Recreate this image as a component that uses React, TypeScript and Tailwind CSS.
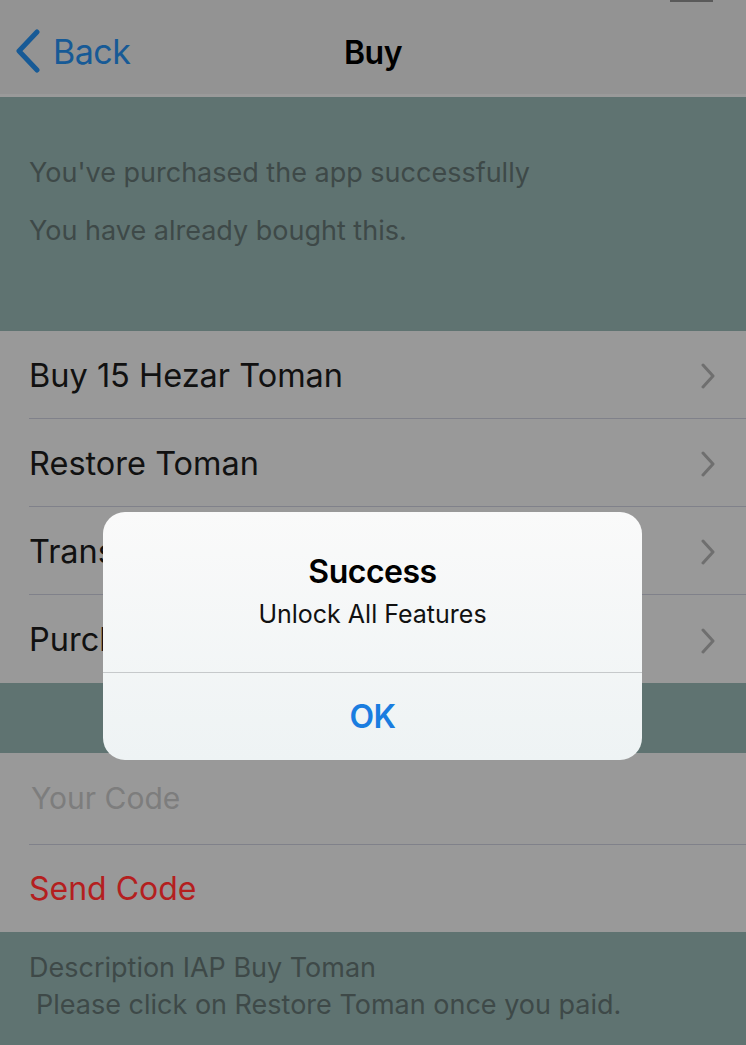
import React from "react";

const rows = ["Buy 15 Hezar Toman", "Restore Toman", "Transfer Toman", "Purchase History"];

function Chevron() {
  return (
    <svg width="16" height="26" viewBox="0 0 16 26" className="shrink-0">
      <path d="M3 2 L13 13 L3 24" fill="none" stroke="#6f6f6f" strokeWidth="3" strokeLinecap="round" strokeLinejoin="round" />
    </svg>
  );
}

export default function App() {
  const font = { fontFamily: "Inter, 'Noto Sans', sans-serif" };
  return (
    <div className="relative w-[746px] h-[1045px] overflow-hidden bg-[#5f7371]" style={font}>
      {/* Nav bar */}
      <div className="relative h-[97px] bg-[#939393] border-b-[3px] border-[#9a9a9a] flex items-center">
        <div className="absolute top-0 left-[670px] w-[43px] h-[2px] bg-[#5a5a5a]" />
        <div className="flex items-center pl-[15px] gap-[12px] pt-[8px]">
          <svg width="26" height="44" viewBox="0 0 26 44">
            <path d="M22 3 L4 22 L22 41" fill="none" stroke="#175a96" strokeWidth="5" strokeLinecap="round" strokeLinejoin="round" />
          </svg>
          <span className="text-[34px] text-[#175a96] tracking-[-0.5px]">Back</span>
        </div>
        <span className="absolute left-0 right-0 text-center pt-[12px] text-[32px] font-semibold text-black tracking-[-0.5px]">Buy</span>
      </div>

      {/* Status section */}
      <div className="h-[234px] pl-[29px] pt-[61px] flex flex-col gap-[28px] text-[27px] text-[#3e4948]">
        <div className="leading-[30px]">You've purchased the app successfully</div>
        <div className="leading-[30px]">You have already bought this.</div>
      </div>

      {/* Actions */}
      <div className="bg-[#999999]">
        {rows.map((r, i) => (
          <div key={r} className="pl-[29px]">
            <div className={`h-[88px] flex items-center justify-between pr-[30px] pt-[3px] ${i < rows.length - 1 ? "border-b border-[#80818a]" : ""}`}>
              <span className="text-[32.5px] text-[#111]">{r}</span>
              <Chevron />
            </div>
          </div>
        ))}
      </div>

      <div className="h-[70px]" />

      {/* Code */}
      <div className="bg-[#999999]">
        <div className="pl-[29px]">
          <div className="h-[92px] flex items-center border-b border-[#80818a]">
            <span className="text-[30px] text-[#7d7d7d] pl-[2px]">Your Code</span>
          </div>
          <div className="h-[87px] flex items-center">
            <span className="text-[32px] text-[#b41f1f]">Send Code</span>
          </div>
        </div>
      </div>

      {/* Description */}
      <div className="pl-[29px] pt-[17px] text-[27px] text-[#3e4948] leading-[37px]">
        <div>Description IAP Buy Toman</div>
        <div className="pl-[7px]">Please click on Restore Toman once you paid.</div>
      </div>

      {/* Alert */}
      <div className="absolute left-[103px] top-[512px] w-[539px] h-[248px] rounded-[22px] overflow-hidden flex flex-col bg-gradient-to-b from-[#fafafa] to-[#eef3f4]">
        <div className="h-[160px] flex flex-col items-center pt-[40px]">
          <span className="text-[32px] font-semibold text-black leading-[40px] tracking-[-0.5px]">Success</span>
          <span className="text-[25px] text-[#111] leading-[30px] mt-[7px]">Unlock All Features</span>
        </div>
        <div className="h-px bg-[#c6c9cb]" />
        <div className="flex-1 flex items-center justify-center">
          <span className="text-[32px] font-semibold text-[#1a7de0] tracking-[-0.5px]">OK</span>
        </div>
      </div>
    </div>
  );
}
